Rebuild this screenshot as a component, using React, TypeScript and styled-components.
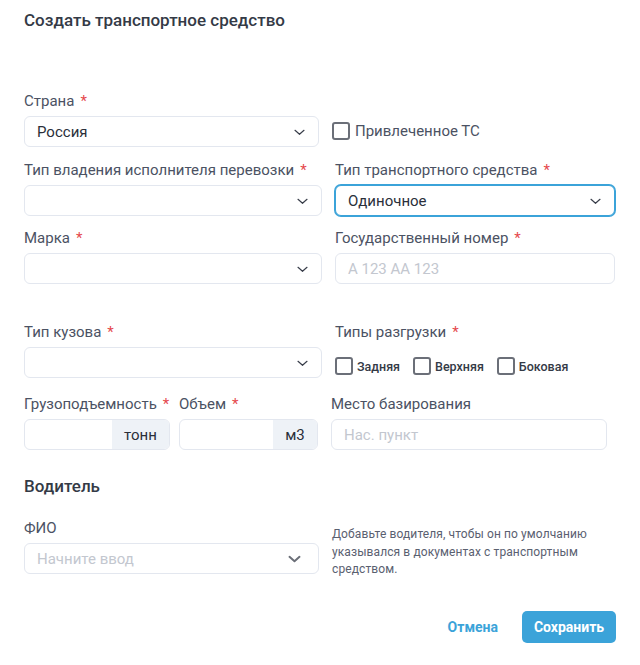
import React from "react";
import styled, { createGlobalStyle } from "styled-components";

const Global = createGlobalStyle`
  html, body { margin: 0; padding: 0; background: #ffffff; }
  body { font-family: Roboto, "Noto Sans", Arial, sans-serif; -webkit-font-smoothing: antialiased; }
  * { box-sizing: border-box; }
`;

const Page = styled.div`
  width: 640px;
  height: 665px;
  padding: 9px 24px 0 24px;
  background: #fff;
  display: flex;
  flex-direction: column;
`;

const Title = styled.h1`
  margin: 0;
  font-size: 17px;
  line-height: 22px;
  font-weight: 500;
  color: #343a46;
`;

const Section = styled.h2<{ $top: number }>`
  margin: ${(p) => p.$top}px 0 0 0;
  font-size: 17px;
  line-height: 22px;
  font-weight: 500;
  color: #343a46;
`;

const Row = styled.div<{ $cols: string; $top: number; $align?: string }>`
  display: grid;
  grid-template-columns: ${(p) => p.$cols};
  align-items: ${(p) => p.$align ?? "end"};
  margin-top: ${(p) => p.$top}px;
`;

const Field = styled.div<{ $ml?: number }>`
  display: flex;
  flex-direction: column;
  margin-left: ${(p) => p.$ml ?? 0}px;
`;

const Label = styled.div`
  font-size: 15px;
  line-height: 16px;
  color: #4b5263;
  margin-bottom: 7px;
  white-space: nowrap;
`;

const Star = styled.span`
  color: #e5484d;
  margin-left: 6px;
`;

const Box = styled.div<{ $focus?: boolean }>`
  height: 31px;
  border: 1px solid ${(p) => (p.$focus ? "#3ba3d9" : "#e3e7ef")};
  box-shadow: ${(p) => (p.$focus ? "0 0 0 1px #3ba3d9" : "none")};
  border-radius: 6px;
  display: flex;
  align-items: center;
  padding: 0 12px 0 12px;
  background: #fff;
  overflow: hidden;
`;

const Value = styled.span<{ $placeholder?: boolean }>`
  flex: 1;
  font-size: 15px;
  color: ${(p) => (p.$placeholder ? "#c3c7cf" : "#2a2f3a")};
`;

const Addon = styled.div<{ $w: number }>`
  width: ${(p) => p.$w}px;
  align-self: stretch;
  margin-right: -12px;
  background: #eef2f7;
  display: flex;
  align-items: center;
  justify-content: center;
  font-size: 15px;
  color: #2a2f3a;
`;

const CheckGroup = styled.div<{ $pb: number; $ml: number; $mt?: number }>`
  display: flex;
  align-items: center;
  gap: 13px;
  padding-bottom: ${(p) => p.$pb}px;
  margin-left: ${(p) => p.$ml}px;
  margin-top: ${(p) => p.$mt ?? 0}px;
`;

const Check = styled.label<{ $small?: boolean }>`
  display: flex;
  align-items: center;
  gap: ${(p) => (p.$small ? 4 : 5)}px;
  font-size: ${(p) => (p.$small ? 12.5 : 15)}px;
  font-weight: ${(p) => (p.$small ? 500 : 400)};
  color: ${(p) => (p.$small ? "#343a46" : "#4b5263")};
`;

const Square = styled.span`
  width: 18px;
  height: 18px;
  border: 2px solid #6b6f78;
  border-radius: 3px;
  display: inline-block;
`;

const Help = styled.p`
  margin: 0 0 0 13px;
  font-size: 12px;
  letter-spacing: 0.1px;
  line-height: 17.5px;
  color: #5a6070;
  padding-top: 6px;
`;

const Footer = styled.div`
  display: flex;
  justify-content: flex-end;
  align-items: center;
  gap: 24px;
  margin-top: 32px;
`;

const LinkButton = styled.button`
  border: 0;
  background: none;
  padding: 0;
  font-family: inherit;
  font-size: 14px;
  font-weight: 700;
  color: #3ba3d9;
`;

const Primary = styled.button`
  border: 0;
  height: 32px;
  width: 94px;
  border-radius: 5px;
  background: #3ba3d9;
  color: #fff;
  font-family: inherit;
  font-size: 14px;
  font-weight: 700;
`;

const ChevronSvg = styled.svg<{ $mr: number }>`
  flex: none;
  margin-right: ${(p) => p.$mr}px;
`;

const Chevron = ({ bold }: { bold?: boolean }) =>
  bold ? (
    <ChevronSvg width="13" height="8" viewBox="0 0 13 8" $mr={5}>
      <path
        d="M1.5 1.8 L6.5 6.2 L11.5 1.8"
        fill="none"
        stroke="#6b6f78"
        strokeWidth={2}
        strokeLinecap="round"
        strokeLinejoin="round"
      />
    </ChevronSvg>
  ) : (
    <ChevronSvg width="11" height="8" viewBox="0 0 11 8" $mr={1}>
      <path
        d="M1 2.3 L5.5 6.3 L10 2.3"
        fill="none"
        stroke="#3a3f4b"
        strokeWidth={1.2}
        strokeLinecap="round"
        strokeLinejoin="round"
      />
    </ChevronSvg>
  );

const Req = ({ children }: { children: React.ReactNode }) => (
  <Label>
    {children}
    <Star>*</Star>
  </Label>
);

export default function App() {
  return (
    <>
      <Global />
      <Page>
        <Title>Создать транспортное средство</Title>

        <Row $cols="295px 1fr" $top={62}>
          <Field>
            <Req>Страна</Req>
            <Box>
              <Value>Россия</Value>
              <Chevron />
            </Box>
          </Field>
          <CheckGroup $pb={7} $ml={13}>
            <Check>
              <Square />
              Привлеченное ТС
            </Check>
          </CheckGroup>
        </Row>

        <Row $cols="298px 293px" $top={15}>
          <Field>
            <Req>Тип владения исполнителя перевозки</Req>
            <Box>
              <Value />
              <Chevron />
            </Box>
          </Field>
          <Field $ml={13}>
            <Req>Тип транспортного средства</Req>
            <Box $focus>
              <Value>Одиночное</Value>
              <Chevron />
            </Box>
          </Field>
        </Row>

        <Row $cols="298px 293px" $top={14}>
          <Field>
            <Req>Марка</Req>
            <Box>
              <Value />
              <Chevron />
            </Box>
          </Field>
          <Field $ml={13}>
            <Req>Государственный номер</Req>
            <Box>
              <Value $placeholder>А 123 АА 123</Value>
            </Box>
          </Field>
        </Row>

        <Row $cols="298px 293px" $top={40}>
          <Field>
            <Req>Тип кузова</Req>
            <Box>
              <Value />
              <Chevron />
            </Box>
          </Field>
          <Field $ml={13}>
            <Req>Типы разгрузки</Req>
            <CheckGroup $pb={3} $ml={0} $mt={10}>
              <Check $small>
                <Square />
                Задняя
              </Check>
              <Check $small>
                <Square />
                Верхняя
              </Check>
              <Check $small>
                <Square />
                Боковая
              </Check>
            </CheckGroup>
          </Field>
        </Row>

        <Row $cols="146px 148px 289px" $top={18}>
          <Field>
            <Req>Грузоподъемность</Req>
            <Box>
              <Value />
              <Addon $w={57}>тонн</Addon>
            </Box>
          </Field>
          <Field $ml={9}>
            <Req>Объем</Req>
            <Box>
              <Value />
              <Addon $w={44}>м3</Addon>
            </Box>
          </Field>
          <Field $ml={13}>
            <Label>Место базирования</Label>
            <Box>
              <Value $placeholder>Нас. пункт</Value>
            </Box>
          </Field>
        </Row>

        <Section $top={25}>Водитель</Section>

        <Row $cols="295px 1fr" $top={23} $align="start">
          <Field>
            <Label>ФИО</Label>
            <Box>
              <Value $placeholder>Начните ввод</Value>
              <Chevron bold />
            </Box>
          </Field>
          <Help>
            Добавьте водителя, чтобы он по умолчанию
            <br />
            указывался в документах с транспортным
            <br />
            средством.
          </Help>
        </Row>

        <Footer>
          <LinkButton>Отмена</LinkButton>
          <Primary>Сохранить</Primary>
        </Footer>
      </Page>
    </>
  );
}
